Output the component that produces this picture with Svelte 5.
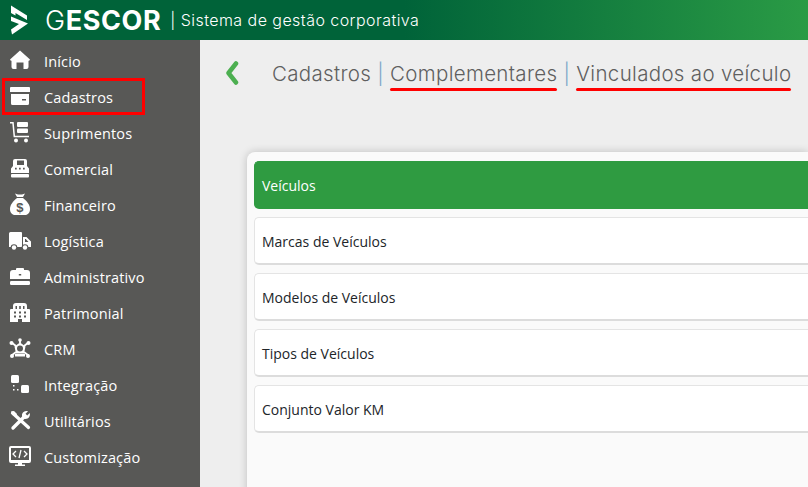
<script lang="ts">
  const menu = [
    { label: 'Início', icon: 'home' },
    { label: 'Cadastros', icon: 'archive' },
    { label: 'Suprimentos', icon: 'dolly' },
    { label: 'Comercial', icon: 'register' },
    { label: 'Financeiro', icon: 'bag' },
    { label: 'Logística', icon: 'truck' },
    { label: 'Administrativo', icon: 'briefcase' },
    { label: 'Patrimonial', icon: 'building' },
    { label: 'CRM', icon: 'crm' },
    { label: 'Integração', icon: 'nodes' },
    { label: 'Utilitários', icon: 'tools' },
    { label: 'Customização', icon: 'monitor' },
  ];

  const rows = ['Veículos', 'Marcas de Veículos', 'Modelos de Veículos', 'Tipos de Veículos', 'Conjunto Valor KM'];
</script>

{#snippet icon(name)}
  <svg class="icon" viewBox="0 0 24 24" width="24" height="24" fill="#fff" aria-hidden="true">
    {#if name === 'home'}
      <path d="M12 1.500 22 10.500 21 12 20.500 11.500V18a2 2 0 0 1-2 2h-3v-6.500h-7V20h-3a2 2 0 0 1-2-2v-6.500L3 12 2 10.500Z" />
    {:else if name === 'archive'}
      <path d="M3 2h18a1 1 0 0 1 1 1v4H2V3a1 1 0 0 1 1-1Z" />
      <path fill-rule="evenodd" d="M3 9h18v9.500a1.500 1.500 0 0 1-1.500 1.500h-15A1.500 1.500 0 0 1 3 18.500ZM14 14v1.500h4V14Z" />
    {:else if name === 'dolly'}
      <path d="M2 1.800h3l1.300 13.700H21" fill="none" stroke="#fff" stroke-width="1.500" />
      <rect x="9" y="1" width="11" height="5" rx="1" />
      <rect x="9" y="7.500" width="11" height="4.500" rx="1" />
      <circle cx="8" cy="19.500" r="2" />
      <circle cx="18" cy="19.500" r="2" />
    {:else if name === 'register'}
      <path fill-rule="evenodd" d="M7 2h10a2 2 0 0 1 2 2v5H5V4a2 2 0 0 1 2-2ZM9 3.500V8h7V3.500Z" />
      <path fill-rule="evenodd" d="M5 9h14l2 2.500V16H3v-4.500ZM7 10.800v1.700h1.700v-1.700ZM11 10.800v1.700h1.700v-1.700ZM15 10.800v1.700h1.700v-1.700Z" />
      <rect x="3" y="17" width="18" height="3.500" rx="1" />
    {:else if name === 'bag'}
      <path d="M7 0.500 10 1.500 14 1.500 17 0.500 15 4H9Z" />
      <path d="M9 5h6c4 3 7 7 7 11 0 3.500-2 6-5 6H7c-3 0-5-2.500-5-6 0-4 3-8 7-11Z" />
      <text x="12" y="19" text-anchor="middle" class="dollar">$</text>
    {:else if name === 'truck'}
      <path d="M1 4.500A1.500 1.500 0 0 1 2.500 3H13a1 1 0 0 1 1 1v14H1Z" />
      <path fill-rule="evenodd" d="M15 8h3.500l4.500 4.500V18h-8ZM17 10v3h3.500L17.800 10Z" />
      <circle cx="6" cy="18.500" r="3.300" fill="#585856" />
      <circle cx="17" cy="18.500" r="3.300" fill="#585856" />
      <circle cx="6" cy="18.500" r="2.200" />
      <circle cx="17" cy="18.500" r="2.200" />
    {:else if name === 'briefcase'}
      <path fill-rule="evenodd" d="M5 5h3V4a1 1 0 0 1 1-1h6a1 1 0 0 1 1 1v1h3a3 3 0 0 1 3 3v6H2V8a3 3 0 0 1 3-3ZM10.800 9v1.500h2.400V9Z" />
      <rect x="2" y="16" width="20" height="4" rx="1.200" />
    {:else if name === 'building'}
      <path fill-rule="evenodd" d="M8 2h8a3 3 0 0 1 3 3v3h2a1 1 0 0 1 1 1v12h-8v-3h-4v3H2V9a1 1 0 0 1 1-1h2V5a3 3 0 0 1 3-3ZM7.500 5v3h1.500V5ZM11.200 5v3h1.600V5ZM15 5v3h1.500V5ZM6 10.500v2h2v-2ZM11 10.500v2h2v-2ZM16 10.500v2h2v-2ZM6 14.500v2h2v-2ZM11 14.500v2h2v-2ZM16 14.500v2h2v-2Z" />
    {:else if name === 'crm'}
      <g stroke="#fff" stroke-width="1.800" fill="none">
        <path d="M3.500 5.500 8 9M20.500 5.500 16 9M12 3v3M3.500 18.500 8 15M20.500 18.500 16 15" />
      </g>
      <path fill-rule="evenodd" d="M12 5.500 17.500 9.500 16 16.500H8L6.500 9.500ZM12 8.500a3 3 0 1 0 0 6 3 3 0 0 0 0-6Z" />
      <circle cx="12" cy="3" r="1.800" />
      <circle cx="3.500" cy="6" r="2" />
      <circle cx="20.500" cy="6" r="2" />
      <circle cx="4" cy="19" r="2" />
      <circle cx="20" cy="19" r="2" />
      <rect x="7" y="17" width="10" height="2.500" />
    {:else if name === 'nodes'}
      <rect x="3" y="2" width="8" height="8" rx="1.500" />
      <rect x="13" y="12" width="8" height="8" rx="1.500" />
      <path d="M5 12h1.500v1.500H5ZM5 16h1.500v1.500H5ZM9 16h1.500v1.500H9Z" />
    {:else if name === 'tools'}
      <path d="M4.500 4 20.500 18.500" stroke="#fff" stroke-width="3.200" fill="none" stroke-linecap="round" />
      <path d="M5 19 15.500 8.500" stroke="#fff" stroke-width="3.400" fill="none" stroke-linecap="round" />
      <path d="M3 2.500 6 2l3 3-1 3-3.500-2Z" />
      <path d="M20 2.200 17.500 4.800 19.200 6.500 21.800 4C22.500 7 20.500 10 17.500 10 15 10 13.500 8 14 5.500 14.500 3 17 1.500 20 2.200Z" />
    {:else if name === 'monitor'}
      <path fill-rule="evenodd" d="M3 1h18a2 2 0 0 1 2 2v13a2 2 0 0 1-2 2H3a2 2 0 0 1-2-2V3a2 2 0 0 1 2-2ZM3 3v12h18V3Z" />
      <path d="M10 18h4v1.500h3V21H7v-1.500h3Z" />
      <path d="M8 6 5 9l3 3M16 6l3 3-3 3M13 5l-2 8" fill="none" stroke="#fff" stroke-width="1.300" />
    {/if}
  </svg>
{/snippet}

<div class="app">
  <header class="topbar">
    <svg class="logo" viewBox="0 0 18 30" width="18" height="30" aria-hidden="true">
      <path d="M0 0.500 16 10.500V15L4.500 8V10.500L0 8Z" fill="#fff" />
      <path d="M0 11.500 17 18.500 1 29.500 0 24.500 8 19 0 16Z" fill="#fff" />
    </svg>
    <span class="brand"><span class="brand-g">G</span>ESCOR</span>
    <span class="tagline">| Sistema de gestão corporativa</span>
  </header>

  <div class="body">
    <nav class="sidebar">
      {#each menu as item (item.label)}
        <div class="menu-item">
          {@render icon(item.icon)}
          <span>{item.label}</span>
        </div>
      {/each}
    </nav>

    <main class="content">
      <div class="crumbs">
        <svg class="back" viewBox="0 0 14 24" width="14" height="24" aria-hidden="true">
          <path d="M11 2.500 3.500 12 11 21.500" fill="none" stroke="#4caf50" stroke-width="4.500" stroke-linecap="round" stroke-linejoin="round" />
        </svg>
        <h1 class="trail">
          Cadastros <span class="sep">|</span> <span class="mark">Complementares</span> <span class="sep">|</span> <span class="mark">Vinculados ao veículo</span>
        </h1>
      </div>

      <section class="card">
        {#each rows as row, i (row)}
          <div class="row" class:active={i === 0}>{row}</div>
        {/each}
      </section>
    </main>
  </div>

  <div class="highlight"></div>
</div>

<style>
  :global(body) {
    margin: 0;
    overflow: hidden;
  }

  .app {
    position: relative;
    width: 808px;
    height: 487px;
    overflow: hidden;
    font-family: 'Open Sans', 'Noto Sans', sans-serif;
    display: flex;
    flex-direction: column;
  }

  .topbar {
    height: 40px;
    flex: none;
    display: flex;
    align-items: center;
    padding-left: 11px;
    color: #fff;
    background: linear-gradient(90deg, #006339 0%, #006339 50%, #2a9b45 100%);
  }

  .logo {
    flex: none;
  }

  .brand {
    margin-left: 16px;
    font-family: Inter, sans-serif;
    font-size: 27px;
    font-weight: 700;
    letter-spacing: 0.6px;
  }

  .brand-g {
    font-weight: 300;
  }

  .tagline {
    margin-left: 9px;
    font-family: Inter, sans-serif;
    font-size: 16px;
    font-weight: 300;
    letter-spacing: 0.45px;
  }

  .body {
    flex: 1;
    display: flex;
    min-height: 0;
  }

  .sidebar {
    width: 200px;
    flex: none;
    padding-top: 3px;
    background: #585856;
    color: #fff;
  }

  .menu-item {
    height: 36px;
    display: flex;
    align-items: center;
    gap: 12px;
    padding-left: 8px;
    font-size: 14.500px;
    letter-spacing: 0.15px;
  }

  .icon {
    flex: none;
  }

  .dollar {
    font-family: 'Liberation Sans', sans-serif;
    font-size: 13px;
    font-weight: 700;
    fill: #585856;
  }

  .content {
    flex: 1;
    min-width: 0;
    background: #eeeeee;
  }

  .crumbs {
    display: flex;
    align-items: center;
    height: 66px;
    padding-left: 25px;
  }

  .back {
    flex: none;
  }

  .trail {
    margin: 0 0 0 33px;
    white-space: nowrap;
    font-family: Inter, sans-serif;
    font-size: 20.500px;
    font-weight: 300;
    letter-spacing: 0.32px;
    color: #5f5f5f;
  }

  .sep {
    color: #7aa6c8;
  }

  .mark {
    position: relative;
    display: inline-block;
  }

  .mark::after {
    content: '';
    position: absolute;
    left: 0;
    right: 0;
    bottom: -5px;
    height: 3px;
    border-radius: 2px;
    background: #f00;
  }

  .card {
    margin: 46px 0 0 47px;
    height: 400px;
    padding: 9px 0 0 7px;
    display: flex;
    flex-direction: column;
    gap: 8px;
    box-sizing: border-box;
    background: #fafafa;
    border-radius: 8px 0 0 0;
    box-shadow: 0 0 8px rgba(0, 0, 0, 0.2);
  }

  .row {
    height: 48px;
    flex: none;
    display: flex;
    align-items: center;
    box-sizing: border-box;
    padding: 2px 0 0 7px;
    font-size: 14px;
    color: #212529;
    background: #fff;
    border: 1px solid #e4e4e4;
    border-bottom: 2px solid #dcdcdc;
    border-right: 0;
    border-radius: 5px 0 0 5px;
  }

  .row.active {
    color: #fff;
    background: #2f9b41;
    border-color: #2f9b41;
  }

  .highlight {
    position: absolute;
    left: 2px;
    top: 78px;
    width: 143px;
    height: 37px;
    box-sizing: border-box;
    border: 3px solid #f00;
  }
</style>
